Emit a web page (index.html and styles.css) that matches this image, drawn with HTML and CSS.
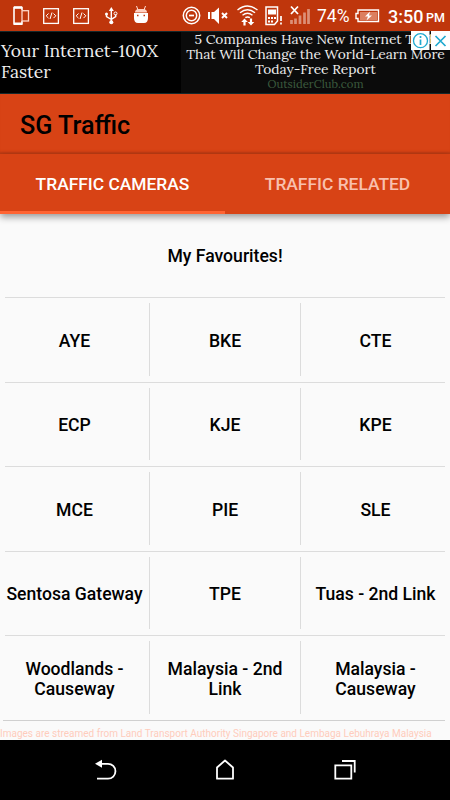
FILE: index.html
```html
<!DOCTYPE html>
<html lang="en">
<head>
<meta charset="utf-8">
<title>SG Traffic</title>
<link rel="stylesheet" href="styles.css">
</head>
<body>
<div class="status">
  <svg class="status-left" width="160" height="31" viewBox="0 0 160 31" fill="none" stroke="#fff">
    <path d="M22 10V7.500H14v16.500h8v-3" stroke-width="1.600"/>
    <path d="M14 7.500h8M14 23.700h8" stroke-width="2.500"/>
    <rect x="22" y="10.700" width="6.500" height="10.300" stroke="#ffd5c8" stroke-width="1.300"/>
    <g id="code"><rect x="43.700" y="8.700" width="14.700" height="14.700" stroke-width="1.300"/><path d="M48.500 13.500l-2.300 2.300 2.300 2.300M53.500 13.500l2.300 2.300-2.300 2.300M52 12.500l-2 6.500"/></g>
    <use href="#code" x="30"/>
    <path d="M111.300 10v12M106.500 14v2.500l4.800 3M115.700 14.500v2l-4.400 2.800" stroke-width="1.400"/>
    <path d="M111.300 7l2.500 4h-5z" fill="#fff" stroke="none"/><circle cx="111.300" cy="22.300" r="2" fill="#fff" stroke="none"/><circle cx="106.500" cy="14" r="1.500" fill="#fff" stroke="none"/><circle cx="115.500" cy="13.500" r="1.500"/>
    <path d="M134 13h14v5q0 5-4 5h-6q-4 0-4-5z" fill="#fff" stroke="none"/>
    <path d="M135 12.500q0-3.500 4-3.500h4q4 0 4 3.500z" fill="#ffcfc0" stroke="none"/><path d="M136.500 6l1.500 4M145.500 6l-1.500 4" stroke="#ffe1d8"/>
    <path d="M137 15.500h1.500M143.500 15.500h1.500" stroke="#bf360c" stroke-width="1.500"/>
  </svg>
  <svg class="status-right" width="152" height="31" viewBox="160 0 152 31" fill="none" stroke="#fff">
    <circle cx="191.500" cy="15.500" r="8.200" stroke-width="1.500"/><circle cx="191.500" cy="15.500" r="5.200" stroke-width="1.500"/><path d="M189 15.500h5" stroke-width="1.700"/>
    <path d="M208 12h2v7h-2zM211.500 12h2.500l5-4.500v16.500l-5-5h-2.500z" fill="#fff" stroke="none"/><path d="M222 13l5 5M227 13l-5 5" stroke-width="1.900"/>
    <path d="M237.500 10q10-8 20 0M240 12.700q7.500-6 15 0M242.500 15.300q5-4 10 0M245.300 17.700q2.300-1.500 4.600 0" stroke-width="1.400"/>
    <path d="M244.500 18.500l3.300 3.500h-2.200v3.500h-2.200v-3.500h-2.200zM251 25.500l-3.300-3.500h2.200v-3.500h2.200v3.500h2.200z" fill="#fff" stroke="none"/>
    <path d="M266 7h11.500v14l-3 3.500H266z" stroke-width="1.500"/><path d="M268 9.500h8v5h-8zM268 17h2v2h-2zM271 17h2v2h-2zM274 17h2v2h-2zM268 20.500h2v2h-2zM271 20.500h2v2h-2z" fill="#fff" stroke="none"/><path d="M281 16v5M281 22.500v2" stroke-width="1.700"/>
    <path d="M291 6.500l7 7.500M298 6.500l-7 7.500" stroke-width="1.800"/>
    <path d="M291.500 20v4M295.500 18.500v5.500M300 15.500v8.500M304.500 12.500v11.500M308.500 9v15" stroke="#dc8f77" stroke-width="2.700"/>
  </svg>
  <span class="percent">74%</span>
  <svg class="battery" width="26" height="16" viewBox="354 8 26 16" fill="none" stroke="#fff"><path d="M358 10h20.500v11.500H358v-3h-2v-5h2z" stroke-width="1.400"/><path d="M360 12h17v8h-17z" fill="#dc7f60" stroke="none"/><path d="M370 11.500l-5 5h3l-1.500 4 5.500-5h-3z" fill="#fff" stroke="none"/></svg>
  <span class="clock">3:50</span><span class="pm">PM</span>
</div>
<div class="ad">
  <div class="ad-title"><span>Your Internet-100X</span><span>Faster</span></div>
  <div class="ad-copy">
    <span>5 Companies Have New Internet Tech</span>
    <span>That Will Change the World-Learn More</span>
    <span>Today-Free Report</span>
    <span class="ad-link">OutsiderClub.com</span>
  </div>
  <svg class="ad-badge" width="39" height="19" viewBox="0 0 39 19" fill="none" stroke="#20a9cf"><path d="M0 0h18.500v19H0zM20 0h19v19H20z" fill="#fff" stroke="none"/><circle cx="9.500" cy="9.700" r="7" stroke-width="1.300"/><path d="M9.500 8.500v5.500M9.500 5v2M24.500 5l10 10M34.500 5l-10 10" stroke-width="1.700"/></svg>
</div>
<header class="bar">SG Traffic</header>
<nav class="tabs"><div class="tab active">TRAFFIC CAMERAS</div><div class="tab">TRAFFIC RELATED</div></nav>
<main class="content">
  <div class="favourites">My Favourites!</div>
  <div class="row"><div class="cell">AYE</div><div class="cell">BKE</div><div class="cell">CTE</div></div>
  <div class="row"><div class="cell">ECP</div><div class="cell">KJE</div><div class="cell">KPE</div></div>
  <div class="row"><div class="cell">MCE</div><div class="cell">PIE</div><div class="cell">SLE</div></div>
  <div class="row"><div class="cell">Sentosa Gateway</div><div class="cell">TPE</div><div class="cell">Tuas - 2nd Link</div></div>
  <div class="row"><div class="cell">Woodlands -<br>Causeway</div><div class="cell">Malaysia - 2nd<br>Link</div><div class="cell">Malaysia -<br>Causeway</div></div>
  <div class="end"></div>
  <div class="credit">Images are streamed from Land Transport Authority Singapore and Lembaga Lebuhraya Malaysia</div>
</main>
<footer class="nav">
  <svg width="24" height="24" viewBox="93 758 24 24" fill="none" stroke="#fff" stroke-width="1.800"><path d="M99 763.800h9a7.450 7.450 0 0 1 0 14.900H97"/><path d="M95 763.800l7-4v8z" fill="#fff" stroke="none"/></svg>
  <svg width="24" height="24" viewBox="213 758 24 24" fill="none" stroke="#fff" stroke-width="1.800"><path d="M217 778.700v-11.200l8-7 8 7v11.200z" stroke-linejoin="round"/></svg>
  <svg width="24" height="24" viewBox="333 758 24 24" fill="none" stroke="#fff" stroke-width="1.800"><path d="M335.300 765.300h16v13.400h-16zM342 761h12.700v11.500"/></svg>
</footer>
</body>
</html>
```
FILE: styles.css
```css
* { box-sizing: border-box; }
body { margin: 0; width: 450px; height: 800px; overflow: hidden; background: #fafafa; font-family: Roboto, sans-serif; color: #000; }
svg { display: block; flex: none; }
.status { height: 31px; display: flex; align-items: center; background: #bf360c; color: #fff; white-space: nowrap; }
.percent { width: 37px; margin-left: 5px; font-size: 17.5px; line-height: 31px; padding-top: 2px; }
.clock { width: 38px; margin-left: 8px; font-size: 18px; font-weight: 500; line-height: 31px; padding-top: 2px; }
.pm { font-size: 12.5px; font-weight: 500; padding-top: 4px; }
.ad { position: relative; height: 63px; display: flex; background: #000; border-top: 1px solid #15282b; border-bottom: 1px solid #15282b; color: #eee; font-family: Lora, "Liberation Serif", serif; white-space: nowrap; }
.ad span { display: block; }
.ad-title { width: 181px; flex: none; padding: 9px 0 0 1px; font-size: 17.5px; line-height: 20.5px; }
.ad-copy { width: 269px; flex: none; background: #0b0b0b; font-size: 13.8px; line-height: 15px; text-align: center; }
.ad-copy .ad-link { font-size: 11.3px; line-height: 14px; color: #3b5b3e; }
.ad-badge { position: absolute; top: -1px; right: 0; }
.bar { height: 60px; padding: 2px 0 0 20px; line-height: 60px; font-size: 25.2px; font-weight: 500; background: #d84315; border-bottom: 1px solid #bd3b13; box-shadow: inset 0 -2px 2px -1px #bd3b13; }
.tabs { position: relative; height: 60px; display: flex; background: #d84315; box-shadow: 0 3px 7px rgba(0,0,0,.4); }
.tab { width: 225px; text-align: center; color: #f8c0ae; font-size: 17.4px; font-weight: 500; line-height: 61px; }
.active { color: #fff; box-shadow: inset 0 -3px #ff6433; }
.content { height: 526px; }
.favourites { height: 83px; text-align: center; font-size: 17.6px; font-weight: 500; line-height: 84px; }
.row { height: 84.6px; margin: 0 5px; border-top: 1.5px solid #dcdcdc; display: grid; grid-template-columns: 145px 151px 144px; padding: 5px 0 6px; }
.cell { display: flex; align-items: center; justify-content: center; text-align: center; font-size: 17.6px; line-height: 20.5px; font-weight: 500; white-space: nowrap; border-right: 1.5px solid #dcdcdc; padding-top: 3px; }
.cell:first-child { padding-right: 5px; }
.cell:last-child { border: 0; padding-left: 5px; }
.end { height: 1px; margin: 0 5px 0 3px; background: #d0d0d0; }
.credit { margin-top: 6px; font-size: 10px; line-height: 14px; color: #ffccbc; white-space: nowrap; }
.nav { height: 60px; background: #000; display: flex; gap: 96px; align-items: center; justify-content: center; }
```
